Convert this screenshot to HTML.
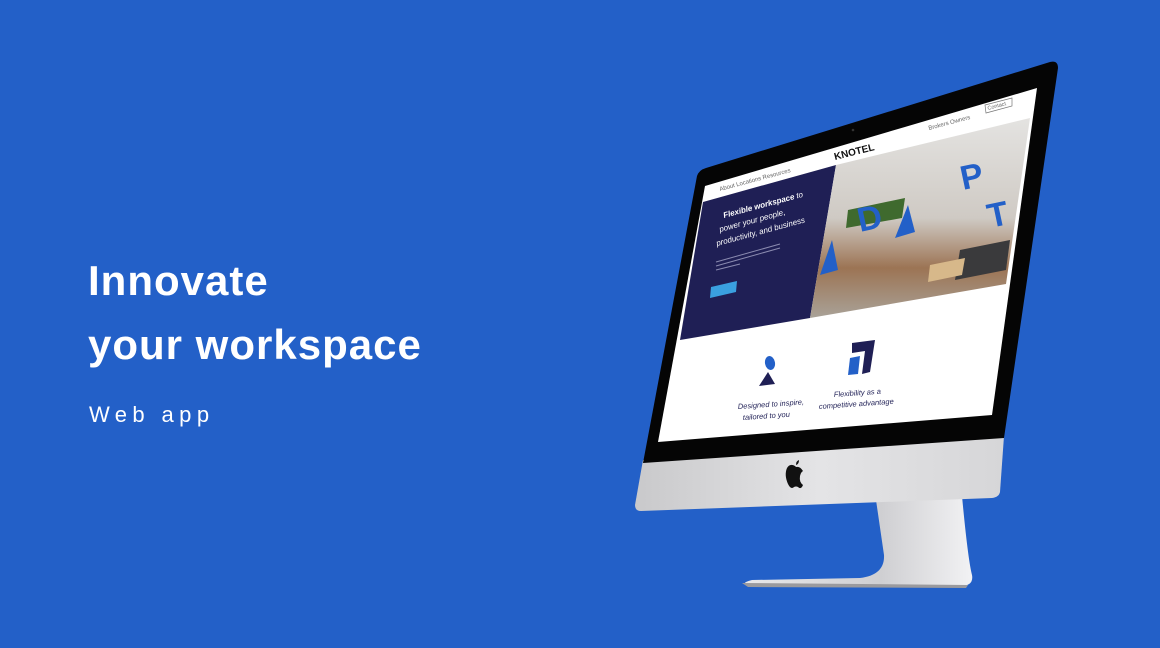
<!DOCTYPE html>
<html><head><meta charset="utf-8"><style>
html,body{margin:0;padding:0}
body{width:1160px;height:648px;background:#2360c8;position:relative;overflow:hidden;font-family:"Liberation Sans",sans-serif}
.h{position:absolute;left:88px;color:#fff;font-weight:bold;font-size:42px;line-height:1;letter-spacing:1px}
.s{position:absolute;left:89px;top:402px;color:#fff;font-size:22px;letter-spacing:5.4px;font-weight:300}
svg{position:absolute;left:0;top:0}
</style></head><body>
<div class="h" style="top:260px">Innovate</div>
<div class="h" style="top:324px">your workspace</div>
<div class="s">Web app</div>
<svg width="1160" height="648" viewBox="0 0 1160 648">
<defs>
<linearGradient id="chin" x1="0" y1="0" x2="1" y2="0"><stop offset="0" stop-color="#c9c9cb"/><stop offset="0.5" stop-color="#e4e4e6"/><stop offset="1" stop-color="#d6d6d8"/></linearGradient>
<linearGradient id="neck" x1="0" y1="0" x2="1" y2="0"><stop offset="0" stop-color="#e8e8ea"/><stop offset="0.6" stop-color="#cfcfd2"/><stop offset="1" stop-color="#f2f2f4"/></linearGradient>
<linearGradient id="photo" x1="0" y1="0" x2="0" y2="1"><stop offset="0" stop-color="#e4e3e1"/><stop offset="0.5" stop-color="#cfcac4"/><stop offset="0.75" stop-color="#9c7454"/><stop offset="1" stop-color="#a9a298"/></linearGradient>
</defs>
<path d="M876 500 L962 496 Q968 560 972 575 Q974 586 960 586 L748 585 Q740 583 752 580 L860 578 Q885 575 884 555 Z" fill="url(#neck)"/>
<path d="M742 583 L968 585 L966 588 L748 587 Z" fill="#9a9a9e"/>
<path d="M643 460 L1004 436 L1000 492 Q999 497 992 498 L641 511 Q635 511 635 505 Z" fill="url(#chin)"/>
<path d="M697 176 Q699 170 706 168 L1050 62 Q1058 60 1058 68 L1004 438 L643 463 Z" fill="#050505"/>
<path d="M705 186 L1037 88 L992 415 L658 442 Z" fill="#ffffff"/>
<path d="M703 202 L836 165 L810 318 L680 340 Z" fill="#1f1f55"/>
<path d="M836 165 L1030 118 L1006 284 L810 318 Z" fill="url(#photo)"/>
<path d="M848 210 L905 198 L902 218 L846 228 Z" fill="#3f6a2e"/>
<path d="M960 250 L1010 240 L1006 270 L955 280 Z" fill="#3a3a3c"/>
<path d="M930 265 L965 258 L962 275 L928 282 Z" fill="#d7b88a"/>
<text x="860" y="232" font-family="Liberation Sans" font-weight="bold" font-size="34" fill="#2360c8" transform="rotate(-12 860 232)">D</text>
<text x="963" y="190" font-family="Liberation Sans" font-weight="bold" font-size="34" fill="#2360c8" transform="rotate(-12 963 190)">P</text>
<text x="990" y="228" font-family="Liberation Sans" font-weight="bold" font-size="34" fill="#2360c8" transform="rotate(-12 990 228)">T</text>
<path d="M895 238 L908 205 L915 232 Z" fill="#2360c8"/>
<path d="M820 275 L832 240 L838 270 Z" fill="#2360c8"/>
<text x="835" y="160" font-family="Liberation Sans" font-weight="bold" font-size="10" fill="#111" transform="rotate(-14 835 160)">KNOTEL</text>
<text x="720" y="191" font-size="6" fill="#666" transform="rotate(-15 720 191)">About  Locations  Resources</text>
<text x="929" y="130" font-size="6" fill="#666" transform="rotate(-15 929 130)">Brokers   Owners</text>
<path d="M985 105 L1012 98 L1012 106 L986 113 Z" fill="none" stroke="#777" stroke-width="0.7"/>
<text x="988" y="110" font-size="5.5" fill="#666" transform="rotate(-15 988 110)">Contact</text>
<g fill="#fff" font-family="Liberation Sans" font-style="italic">
<text x="724" y="218" font-size="8" transform="rotate(-15 724 218)"><tspan font-weight="bold">Flexible workspace</tspan> to</text>
<text x="720" y="232" font-size="8" transform="rotate(-15 720 232)">power your people,</text>
<text x="717" y="246" font-size="8" transform="rotate(-15 717 246)">productivity, and business</text>
</g>
<path d="M716 262 L780 244 M716 266 L780 248 M716 270 L740 264" stroke="#8b8bb0" stroke-width="1"/>
<path d="M711 287 L737 281 L736 292 L710 298 Z" fill="#3aa0e0"/>
<ellipse cx="770" cy="363" rx="5" ry="7" fill="#2360c8" transform="rotate(-10 770 363)"/>
<path d="M759 386 L768 372 L775 384 Z" fill="#1f1f55"/>
<path d="M852 343 L875 340 L870 372 L862 374 L865 351 L852 353 Z" fill="#1f1f55"/>
<path d="M850 358 L860 356 L858 374 L848 375 Z" fill="#2360c8"/>
<g fill="#1f1f55" font-family="Liberation Sans" font-size="7.5" font-style="italic">
<text x="738" y="409" transform="rotate(-4 738 409)">Designed to inspire,</text>
<text x="743" y="420" transform="rotate(-4 743 420)">tailored to you</text>
<text x="834" y="397" transform="rotate(-4 834 397)">Flexibility as a</text>
<text x="819" y="409" transform="rotate(-4 819 409)">competitive advantage</text>
</g>
<circle cx="853" cy="130" r="1.3" fill="#333"/>
<path d="M795 466 Q790 463 787 468 Q784 475 788 484 Q791 490 794 487 Q796 486 798 487 Q801 490 803 485 Q799 482 800 476 Q801 472 803 471 Q800 466 796 467 Z M796 465 Q796 461 799 460 Q799 464 796 465 Z" fill="#111"/>
</svg>
</body></html>
